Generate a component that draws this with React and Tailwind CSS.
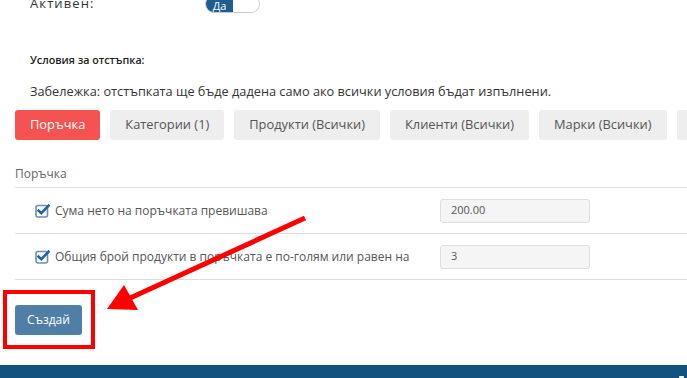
import React from "react";

function Check() {
  return (
    <svg width="15" height="15" viewBox="0 0 15 15" className="shrink-0">
      <rect x="1" y="2.5" width="11.5" height="11.5" rx="2" fill="none" stroke="#6b8fb5" strokeWidth="1.6" />
      <path d="M3.6 7.6 L6.3 10.2 L13.6 2.6" fill="none" stroke="#1f63a3" strokeWidth="2.6" strokeLinecap="square" />
    </svg>
  );
}

const tabs = [
  { label: "Поръчка", active: true },
  { label: "Категории (1)" },
  { label: "Продукти (Всички)" },
  { label: "Клиенти (Всички)" },
  { label: "Марки (Всички)" },
  { label: "Доставка (Всички)" },
];

const rows = [
  { label: "Сума нето на поръчката превишава", value: "200.00" },
  { label: "Общия брой продукти в поръчката е по-голям или равен на", value: "3" },
];

export default function App() {
  return (
    <div className="relative w-[687px] h-[378px] overflow-hidden bg-white font-['Open_Sans',sans-serif]">
      <div className="flex flex-col">
        <div className="flex items-center h-[18px] -mt-[5px] pl-[30px]">
          <span className="w-[175px] text-[13px] tracking-[1.1px] text-[#333]">Активен:</span>
          <div className="flex h-[18px] w-[55px] rounded-full overflow-hidden border border-[#c8c8c8]">
            <div className="flex items-center justify-center w-[27px] bg-[#1f5c8f] text-white text-[11px] leading-none pt-[2px]">Да</div>
            <div className="flex-1 bg-white rounded-full"></div>
          </div>
        </div>

        <div className="mt-[40px] pl-[30px] h-[15px] text-[10.7px] leading-[15px] font-semibold text-[#222]">
          Условия за отстъпка:
        </div>

        <div className="mt-[14px] pl-[30px] h-[18px] text-[12.75px] leading-[18px] text-[#333] whitespace-nowrap">
          Забележка: отстъпката ще бъде дадена само ако всички условия бъдат изпълнени.
        </div>

        <div className="mt-[10px] flex gap-[10px] pl-[15px] h-[30px] whitespace-nowrap">
          {tabs.map((t) => (
            <div
              key={t.label}
              className={
                t.active
                  ? "flex items-center px-[15px] rounded-[3px] bg-[#f55252] text-white text-[12.85px] shrink-0"
                  : "flex items-center px-[15px] rounded-[3px] bg-[#eeeeee] text-[#555] text-[12.85px] shrink-0"
              }
            >
              {t.label}
            </div>
          ))}
        </div>

        <div className="ml-[15px] mt-[26px] h-[22px] pb-[5px] border-b border-[#dddddd] text-[12px] leading-[16px] text-[#666]">
          Поръчка
        </div>

        {rows.map((r) => (
          <div key={r.label} className="ml-[15px] h-[46px] border-b border-[#dddddd] flex items-center pl-[20px]">
            <div className="w-[405px] flex items-center gap-[5px]">
              <Check />
              <span className="text-[12px] text-[#555] whitespace-nowrap">{r.label}</span>
            </div>
            <div className="w-[150px] h-[24px] rounded-[3px] border border-[#dedede] bg-[#f5f5f5] flex items-center pl-[10px] text-[11px] text-[#555]">
              {r.value}
            </div>
          </div>
        ))}

        <div className="ml-[3px] mt-[10px] w-[92px] h-[59px] border-4 border-[#ff0000] pl-[8px] pt-[11px]">
          <div className="w-[67px] h-[30px] rounded-[3px] bg-[#4f7ea6] text-white text-[12px] flex items-center justify-center">
            Създай
          </div>
        </div>

        <div className="mt-[16px] h-[20px] bg-[#13527f] relative">
          <div className="absolute left-[679px] top-[11px] w-[5px] h-[3px] bg-white rounded-t-[1px]"></div>
        </div>
      </div>

      <svg className="absolute left-0 top-0 pointer-events-none" width="687" height="378" viewBox="0 0 687 378">
        <line x1="305" y1="218" x2="128" y2="299" stroke="#ff0000" strokeWidth="5" />
        <polygon points="107,309 124,285 138,310" fill="#ff0000" />
      </svg>
    </div>
  );
}
